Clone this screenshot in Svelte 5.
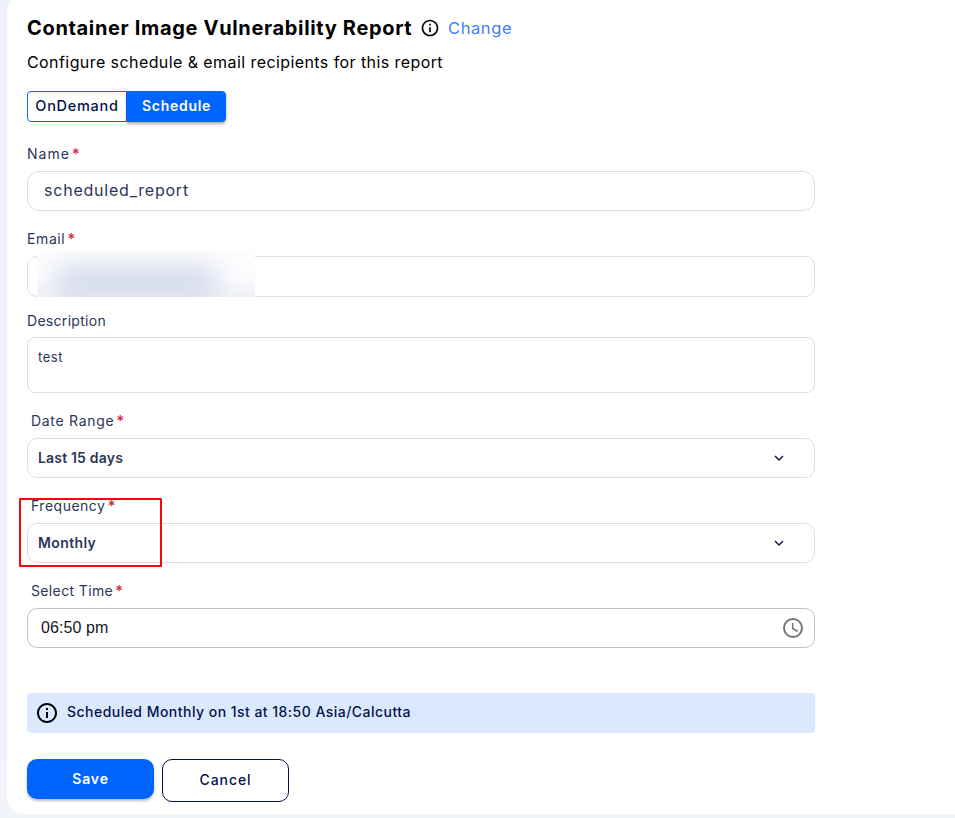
<script>
  let name = $state('scheduled_report');
  let description = $state('test');
  let mode = $state('Schedule');
  const selects = [
    { label: 'Date Range', value: 'Last 15 days', cls: 'range' },
    { label: 'Frequency', value: 'Monthly', cls: 'freq' }
  ];
</script>

{#snippet info(size)}
  <svg class="info" width={size} height={size} viewBox="0 0 24 24" aria-hidden="true">
    <path d="M11 7h2v2h-2zm0 4h2v6h-2zm1-9C6.48 2 2 6.48 2 12s4.48 10 10 10 10-4.480 10-10S17.520 2 12 2zm0 18c-4.410 0-8-3.590-8-8s3.590-8 8-8 8 3.590 8 8-3.590 8-8 8z" />
  </svg>
{/snippet}

<div class="page">
  <main class="card">
    <div class="form">
      <header>
        <h1>Container Image Vulnerability Report</h1>
        {@render info(20)}
        <a href="#change">Change</a>
      </header>
      <p class="subtitle">Configure schedule &amp; email recipients for this report</p>

      <div class="toggle">
        <button class="ondemand" class:active={mode === 'OnDemand'} onclick={() => (mode = 'OnDemand')}>OnDemand</button>
        <button class="schedule" class:active={mode === 'Schedule'} onclick={() => (mode = 'Schedule')}>Schedule</button>
      </div>

      <div class="field name">
        <div class="label"><span>Name</span><b>*</b></div>
        <input class="box" bind:value={name} />
      </div>

      <div class="field email">
        <div class="label"><span>Email</span><b>*</b></div>
        <div class="box"><div class="redacted"><i></i></div></div>
      </div>

      <div class="field desc">
        <div class="label"><span>Description</span></div>
        <textarea class="box" bind:value={description}></textarea>
      </div>

      {#each selects as s}
        <div class="field inset {s.cls}">
          <div class="label"><span>{s.label}</span><b>*</b></div>
          <div class="box select">
            <span>{s.value}</span>
            <svg width="10" height="6" viewBox="0 0 10 6"><path d="M1 1l4 4 4-4" fill="none" stroke="#06134a" stroke-width="1.4" /></svg>
          </div>
          {#if s.cls === 'freq'}<div class="highlight"></div>{/if}
        </div>
      {/each}

      <div class="field inset timefield">
        <div class="label"><span>Select Time</span><b>*</b></div>
        <div class="box time">
          <span>06:50 pm</span>
          <svg width="20" height="20" viewBox="0 0 20 20" fill="none" stroke="#757575"><circle cx="10" cy="10" r="9" stroke-width="2" /><path d="M9.700 5v5.500l5 3" stroke-width="1.500" /></svg>
        </div>
      </div>

      <div class="banner">{@render info(24)}<span>Scheduled Monthly on 1st at 18:50 Asia/Calcutta</span></div>

      <div class="actions">
        <button class="save">Save</button>
        <button class="cancel">Cancel</button>
      </div>
    </div>
  </main>
</div>

<style>
  :global(body) { margin: 0; overflow: hidden; }
  * { box-sizing: border-box; }
  .page { height: 818px; overflow: hidden; padding-left: 7px; background: linear-gradient(#edf1fa, #eef1fa 85%, #f1f5f9); font-family: Inter, "Open Sans", sans-serif; color: #2b3658; }
  .card { height: 818px; margin-top: -4px; padding: 22px 20px 0; background: #fff; border-radius: 16px 0 0 16px; }
  .form { width: 788px; }
  header { display: flex; align-items: center; height: 20px; white-space: nowrap; color: #000; }
  h1 { margin: 0; width: 385px; font-size: 20px; font-weight: 700; line-height: 20px; letter-spacing: 0.66px; }
  header .info { margin-left: 8px; }
  .info { fill: #000; flex: none; }
  a { margin-left: 8px; color: #4480f8; font-size: 16.500px; line-height: 20px; letter-spacing: 0.6px; text-decoration: none; }
  .subtitle { margin: 14px 0 0; color: #000; font-size: 16px; line-height: 20px; letter-spacing: 0.420px; white-space: nowrap; }
  .toggle { display: flex; width: 199px; height: 31px; margin-top: 19px; }
  button { font-family: inherit; padding: 0 0 2px; font-size: 14px; font-weight: 500; }
  .toggle button { width: 100px; border: 1px solid #0866ff; background: #fff; color: #06134a; border-radius: 4px 0 0 4px; letter-spacing: 0.720px; }
  .toggle .ondemand { font-size: 14.500px; }
  .toggle .schedule { width: 99px; border-radius: 0 4px 4px 0; }
  .toggle .active { background: #0065ff; color: #fff; font-weight: 600; box-shadow: 0 2px 3px #0005; }
  .field { position: relative; margin-top: 18px; }
  .name { margin-top: 22px; }
  .desc { margin-top: 14px; }
  .label { display: flex; height: 20px; line-height: 20px; font-size: 14px; margin-bottom: 7px; white-space: nowrap; }
  .label b { color: #d32f3f; font-size: 15px; font-weight: 600; margin-left: 2px; }
  .name .label span { letter-spacing: 1px; }
  .email .label span { letter-spacing: 0.600px; }
  .desc .label span { letter-spacing: 0.300px; }
  .range .label span { letter-spacing: 0.700px; }
  .freq .label span { letter-spacing: 0.500px; }
  .timefield .label span { letter-spacing: 0.360px; }
  .desc .label { margin-bottom: 6px; }
  .inset .label { padding-left: 4px; }
  .box { display: block; width: 788px; height: 40px; border: 1px solid #d9deeb; border-radius: 10px; background: #fff; color: #2b3658; font-family: inherit; outline: 0; }
  input.box { padding: 0 16px 2px; font-size: 16px; letter-spacing: 0.780px; border-radius: 12px; }
  .email .box { height: 41px; position: relative; }
  .redacted { position: absolute; left: 9px; top: -6px; width: 218px; height: 46px; overflow: hidden; background: linear-gradient(#fdfdfe, #fafbfd 60%, #eff1f6); }
  .redacted i { position: absolute; left: 18px; top: 14px; width: 162px; height: 36px; border-radius: 10px; background: #d6dceb; filter: blur(12px); }
  .desc .box { height: 56px; border-radius: 8px; resize: none; padding: 9px 10px; font-size: 13px; letter-spacing: 0.550px; line-height: 20px; overflow: hidden; }
  .select, .time { display: flex; align-items: center; justify-content: space-between; }
  .select { padding: 0 30px 0 10px; font-size: 14px; font-weight: 600; }
  .select span { margin-top: -2px; }
  .range .select span { letter-spacing: 0.180px; }
  .freq .select span { letter-spacing: 0.380px; }
  .highlight { position: absolute; left: -8px; top: 2px; width: 143px; height: 69px; border: 2px solid #f40808; border-radius: 1px; }
  .time { border-color: #c2c2c2; padding: 0 11px 0 13px; font: 16px "Liberation Sans", sans-serif; letter-spacing: 0.100px; color: #16181d; }
  .banner { display: flex; align-items: center; height: 40px; margin-top: 45px; padding-left: 8px; border-radius: 4px; background: #dbe9ff; color: #06134a; font-size: 14px; font-weight: 500; letter-spacing: 0.470px; white-space: nowrap; }
  .banner span { margin: -3px 0 0 8px; }
  .actions { display: flex; align-items: flex-start; gap: 8px; margin-top: 26px; }
  .actions button { width: 127px; border-radius: 10px; letter-spacing: 0.900px; }
  .save { height: 40px; border: 0; background: #0065ff; color: #fff; font-weight: 600; box-shadow: 0 2px 3px #0004; }
  .cancel { height: 43px; border: 1px solid #06134a; background: #fff; color: #06134a; }
</style>
